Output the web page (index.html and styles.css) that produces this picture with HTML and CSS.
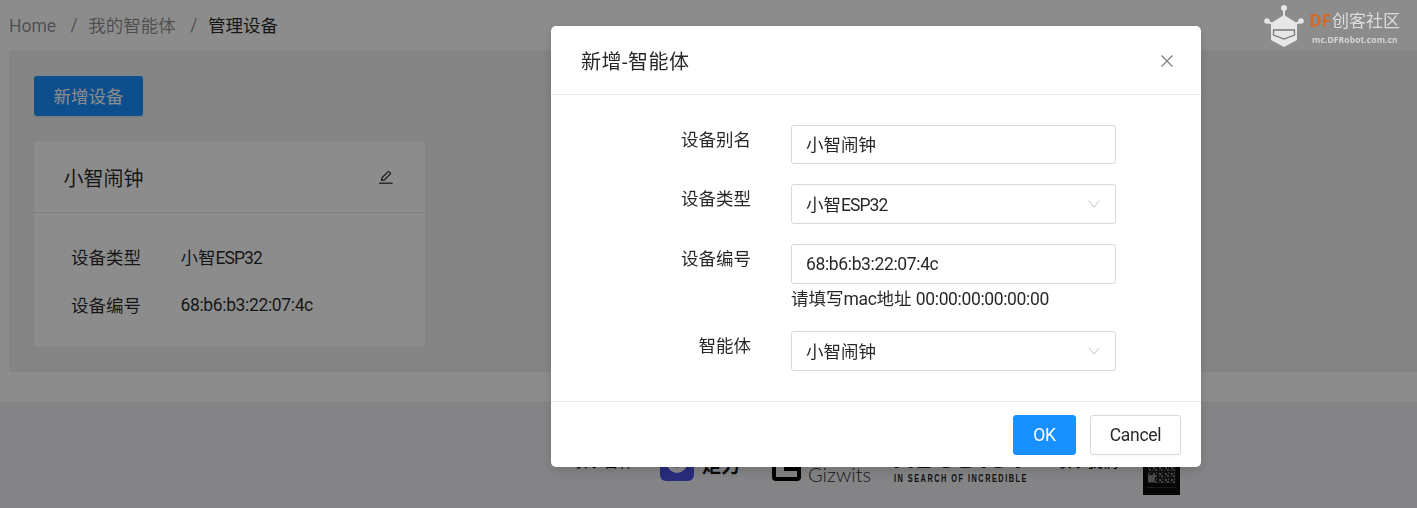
FILE: index.html
```html
<!DOCTYPE html>
<html lang="zh-CN">
<head>
<meta charset="utf-8">
<title>管理设备</title>
<link rel="stylesheet" href="styles.css">
</head>
<body>
<div class="page">
  <nav class="crumbs">
    <span class="crumb home">Home</span><span class="sep">/</span>
    <span class="crumb">我的智能体</span><span class="sep">/</span>
    <span class="crumb current">管理设备</span>
  </nav>
  <main class="content">
    <button class="add-btn">新增设备</button>
    <section class="card">
      <header class="card-head">
        <span class="card-title">小智闹钟</span>
        <svg class="edit" width="16" height="16" viewBox="0 0 16 16" fill="none" stroke="currentColor" stroke-width="1.2"><path d="M3.6 11.2l.5-2.6L9.9 2.8a.9.9 0 0 1 1.3 0l1 1a.9.9 0 0 1 0 1.3L6.4 10.9z"/><path d="M1.2 14.2h13.4"/></svg>
      </header>
      <div class="card-body">
        <div class="meta"><span class="meta-key">设备类型</span><span>小智<span class="caps">ESP32</span></span></div>
        <div class="meta"><span class="meta-key">设备编号</span><span class="tight mac">68:b6:b3:22:07:4c</span></div>
      </div>
    </section>
  </main>
  <footer class="site-foot">
    <span class="foot-label">联系合作 :</span>
    <svg class="logo-blue" width="34" height="34" viewBox="0 0 34 34"><rect width="34" height="34" rx="6" fill="#4b50e6"/><circle cx="17" cy="16" r="10" fill="#fff"/><circle cx="17" cy="16" r="4.500" fill="#4b50e6"/></svg>
    <span class="logo-cn">炬力</span>
    <svg class="logo-g" width="29" height="30" viewBox="0 0 29 30" fill="none" stroke="#000" stroke-width="4"><path d="M27 2H4a2 2 0 0 0-2 2v22a2 2 0 0 0 2 2h21a2 2 0 0 0 2-2v-8H12"/></svg>
    <span class="logo-giz">Gizwits</span>
    <div class="logo-abu"><span class="abu-name">ABUDIST</span><span class="abu-tag">IN SEARCH OF INCREDIBLE</span></div>
    <span class="foot-label follow">联系我们 :</span>
    <svg class="qr" width="37" height="50" viewBox="0 0 37 50"><defs><pattern id="qrdots" width="6" height="6" patternUnits="userSpaceOnUse"><rect width="6" height="6" fill="#1c1c1c"/><rect width="2" height="2" fill="#777"/><rect x="3" y="1" width="2" height="1" fill="#555"/><rect x="1" y="3" width="1" height="2" fill="#666"/><rect x="4" y="4" width="2" height="2" fill="#888"/></pattern></defs><rect width="37" height="50" fill="#0c0c0c"/><rect x="5" y="5" width="28" height="33" fill="url(#qrdots)"/><rect x="5" y="30" width="7" height="7" fill="#888"/><rect x="4" y="42" width="29" height="1" fill="#333"/></svg>
  </footer>
</div>

<div class="mask"></div>

<div class="wrap">
  <div class="modal">
    <div class="modal-head">
      <span class="modal-title">新增-智能体</span>
      <svg class="close" width="14" height="14" viewBox="0 0 14 14" fill="none" stroke="currentColor" stroke-width="1.2"><path d="M1.5 1.5l11 11M12.5 1.5l-11 11"/></svg>
    </div>
    <div class="modal-body">
      <div class="row first">
        <label class="label">设备别名</label>
        <div class="control"><div class="field">小智闹钟</div></div>
      </div>
      <div class="row">
        <label class="label">设备类型</label>
        <div class="control"><div class="field"><span>小智<span class="caps">ESP32</span></span><svg class="chev" width="12" height="8" viewBox="0 0 12 8" fill="none" stroke="currentColor"><path d="M.7.8L6 7 11.3.8"/></svg></div></div>
      </div>
      <div class="row">
        <label class="label">设备编号</label>
        <div class="control"><div class="field"><span class="tight mac">68:b6:b3:22:07:4c</span></div><div class="help">请填写<span class="tight">mac</span>地址 <span class="tight">00:00:00:00:00:00</span></div></div>
      </div>
      <div class="row">
        <label class="label">智能体</label>
        <div class="control"><div class="field">小智闹钟<svg class="chev" width="12" height="8" viewBox="0 0 12 8" fill="none" stroke="currentColor"><path d="M.7.8L6 7 11.3.8"/></svg></div></div>
      </div>
    </div>
    <div class="modal-foot">
      <button class="btn primary">OK</button>
      <button class="btn">Cancel</button>
    </div>
  </div>
</div>

<div class="brand">
  <svg class="brand-mark" width="42" height="44" viewBox="0 0 42 44"><g fill="#e6e6e6"><circle cx="21" cy="5" r="3"/><circle cx="4" cy="18" r="2.8"/><circle cx="38" cy="18" r="2.8"/><path d="M20 5h2v10h-2zM4 17l6 3-1 2-6-3zM38 17l-6 3 1 2 6-3z"/><path d="M21 12l13 8v17l-13 7-13-7V20z"/></g><path d="M10.500 27h21v5l-10.500 4-10.500-4z" fill="none" stroke="#777" stroke-width="1.300"/></svg>
  <div class="brand-text">
    <div class="brand-name"><span class="brand-df">DF</span>创客社区</div>
    <div class="brand-url">mc.DFRobot.com.cn</div>
  </div>
</div>
</body>
</html>
```
FILE: styles.css
```css
* { box-sizing: border-box; }
html, body { margin: 0; padding: 0; height: 100%; overflow: hidden; }
body {
  background: #fff;
  font-family: Roboto, "Noto Sans CJK SC", sans-serif;
  font-size: 17.5px;
  color: rgba(0,0,0,.85);
}
.page { display: flex; flex-direction: column; height: 100%; }
.tight { letter-spacing: -.36px; }
.mac { margin-top: 2px; }
.caps { letter-spacing: -.95px; }

.crumbs { height: 51px; padding: 0 0 2px 9px; display: flex; align-items: center; flex: none; color: rgba(0,0,0,.45); }
.home { margin-top: 2px; }
.sep { margin: 0 10.500px 0 14.500px; }
.current { color: rgba(0,0,0,.85); }

.content { height: 321px; flex: none; margin: 0 0 30px 9px; padding: 25px; background: #f0f0f0; }
.add-btn {
  display: block; width: 109px; height: 40px; padding: 0 0 2px;
  border: 0; border-radius: 3px; background: #1890ff; color: #fff;
  font: inherit; box-shadow: 0 2px 0 rgba(0,0,0,.05);
}
.card { width: 391px; margin-top: 25px; height: 206px; background: #fff; border-radius: 3px; }
.card-head { height: 72px; padding: 0 30px 0 29.500px; display: flex; align-items: center; justify-content: space-between; border-bottom: 1px solid #e8e8e8; }
.card-title { font-size: 20px; margin-top: 2px; }
.edit { margin-right: 1px; margin-top: 1px; }
.card-body { padding: 19px 37px; }
.meta { display: flex; height: 48px; align-items: center; }
.meta-key { width: 109.500px; }

.site-foot { flex: 1; min-height: 106px; background: #f0f1f5; display: flex; align-items: flex-end; padding-left: 572px; padding-bottom: 26px; }
.foot-label { font-size: 15.600px; line-height: 20px; margin-bottom: 10px; color: #000; width: 76px; white-space: nowrap; }
.logo-blue { margin-left: 12px; margin-bottom: 1px; }
.logo-cn { margin-left: 8px; font-size: 19px; line-height: 24px; font-weight: 700; color: #111; margin-bottom: 3px; }
.logo-g { margin-left: 32px; margin-bottom: 1px; }
.logo-giz { margin-left: 7px; font-family: Lato, sans-serif; font-weight: 300; font-size: 20px; line-height: 22px; color: #333; margin-bottom: -3px; width: 60px; white-space: nowrap; }
.logo-abu { margin-left: 26px; display: flex; flex-direction: column; width: 134px; align-items: flex-start; margin-bottom: -1px; }
.abu-name { font-family: "Liberation Sans", sans-serif; font-weight: 700; font-size: 27px; line-height: 20px; letter-spacing: 2px; color: #222; margin-bottom: 5px; }
.abu-tag { font-family: "Liberation Sans", sans-serif; font-weight: 700; font-size: 10px; line-height: 9px; letter-spacing: 2px; color: #222; white-space: nowrap; transform: scaleX(.737); transform-origin: left center; }
.follow { margin-left: 28px; margin-right: 11px; }
.qr { margin-bottom: -13px; flex: none; }

.mask { position: fixed; inset: 0; background: rgba(0,0,0,.45); z-index: 10; }
.wrap { position: fixed; inset: 0; z-index: 11; padding: 26px 0 0 551px; }
.modal { width: 650px; background: #fff; border-radius: 5px; box-shadow: 0 4px 12px rgba(0,0,0,.15); }
.modal-head { height: 69px; padding: 0 27px 0 30px; display: flex; align-items: center; justify-content: space-between; border-bottom: 1px solid #e8e8e8; }
.modal-title { font-size: 20px; letter-spacing: .5px; color: rgba(0,0,0,.85); }
.close { color: rgba(0,0,0,.5); margin-top: 2px; }
.modal-body { padding: 30px 0; }
.row { display: flex; margin-bottom: 20px; }
.first .field { height: 39px; }
.row:last-child { margin-bottom: 0; }
.label { width: 200px; text-align: right; line-height: 30px; height: 30px; flex: none; }
.control { margin-left: 40px; width: 325px; }
.field { height: 40px; border: 1px solid #d9d9d9; border-radius: 3px; padding: 0 14px 2px; display: flex; align-items: center; justify-content: space-between; }
.chev { color: #bfbfbf; margin: 2px 1px 0 0; }
.help { height: 27px; line-height: 30px; white-space: nowrap; }
.modal-foot { height: 66px; border-top: 1px solid #e8e8e8; padding: 13px 20px 0 0; display: flex; justify-content: flex-end; gap: 14px; align-items: flex-start; }
.btn { height: 40px; width: 91px; padding: 0; background: #fff; border: 1px solid #d9d9d9; border-radius: 3px; font: inherit; letter-spacing: -.3px; color: rgba(0,0,0,.85); box-shadow: 0 2px 0 rgba(0,0,0,.015); }
.primary { width: 63px; background: #1890ff; border-color: #1890ff; color: #fff; }

.brand { position: fixed; top: 3px; left: 1263px; z-index: 20; display: flex; gap: 4px; }
.brand-text { padding-top: 7px; }
.brand-name { font-family: "Noto Sans CJK SC", sans-serif; font-size: 17px; line-height: 20px; color: #dcdcdc; white-space: nowrap; width: 92px; }
.brand-df { color: #cf6a30; font-family: "Open Sans", sans-serif; font-weight: 700; font-size: 17px; margin-right: 1px; }
.brand-url { font-family: "Open Sans", sans-serif; font-size: 8.500px; font-weight: 700; line-height: 12px; margin: 3px 0 0 3px; color: #d5d5d5; white-space: nowrap; letter-spacing: .1px; }
```
